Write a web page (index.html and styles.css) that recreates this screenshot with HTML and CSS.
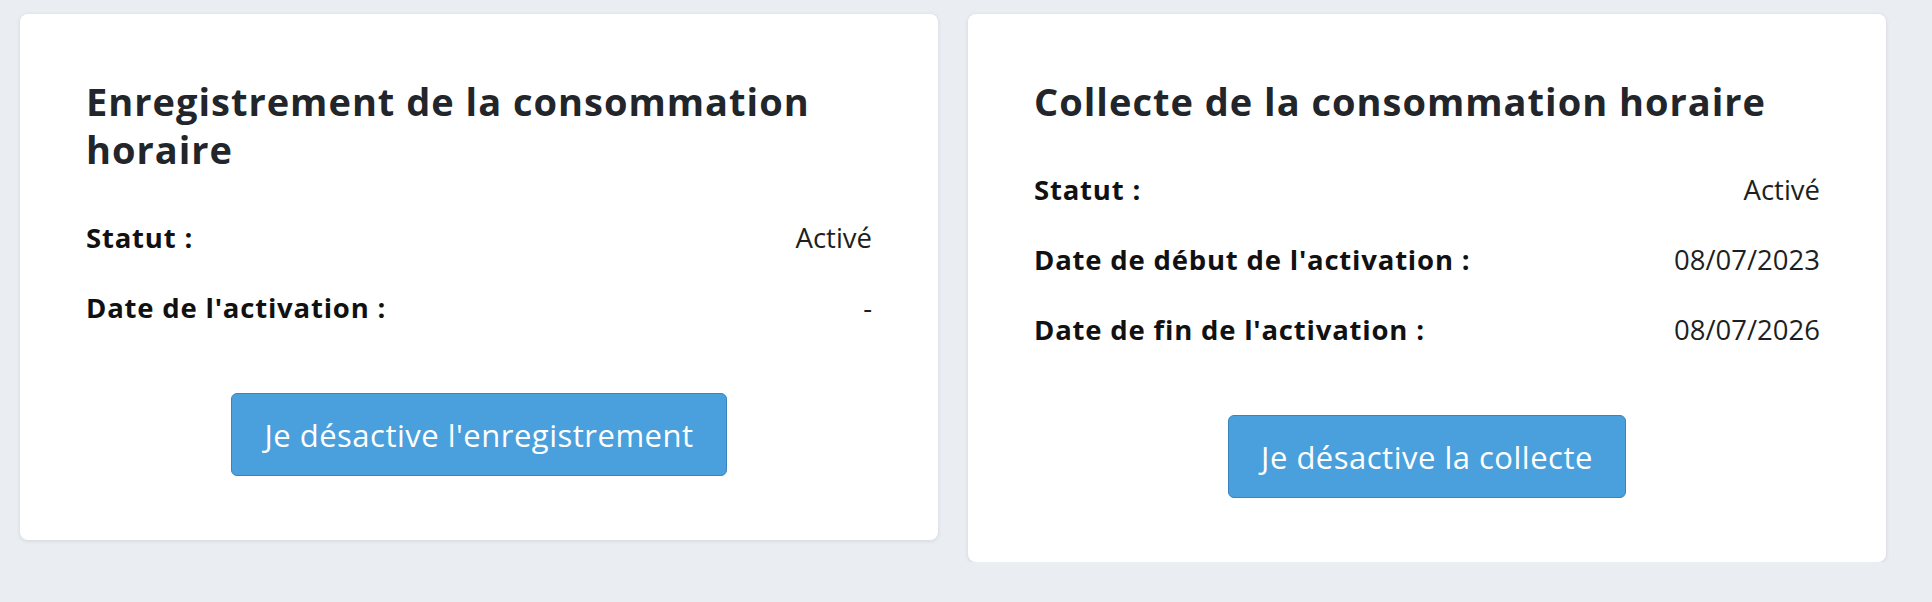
FILE: index.html
```html
<!DOCTYPE html>
<html lang="fr">
<head>
<meta charset="utf-8">
<title>Consommation horaire</title>
<link rel="stylesheet" href="styles.css">
</head>
<body>
<main class="page">
  <section class="card">
    <h2 class="card-title">Enregistrement de la consommation horaire</h2>
    <div class="row"><span class="label">Statut :</span><span class="value">Activé</span></div>
    <div class="row"><span class="label">Date de l'activation :</span><span class="value">-</span></div>
    <div class="actions"><button class="btn">Je désactive l'enregistrement</button></div>
  </section>
  <section class="card">
    <h2 class="card-title">Collecte de la consommation horaire</h2>
    <div class="row"><span class="label">Statut :</span><span class="value">Activé</span></div>
    <div class="row"><span class="label">Date de début de l'activation :</span><span class="value">08/07/2023</span></div>
    <div class="row"><span class="label">Date de fin de l'activation :</span><span class="value">08/07/2026</span></div>
    <div class="actions"><button class="btn">Je désactive la collecte</button></div>
  </section>
</main>
</body>
</html>
```
FILE: styles.css
```css
html, body {
  margin: 0;
  padding: 0;
  background: #eaedf2;
}
body {
  font-family: "Open Sans", "Noto Sans", sans-serif;
  color: #212529;
}
.page {
  display: flex;
  align-items: flex-start;
  gap: 30px;
  padding: 14px 46px 0 20px;
}
.card {
  flex: 1 1 0;
  background: #fff;
  border-radius: 8px;
  box-shadow: 0 1px 4px rgba(30, 40, 60, 0.12);
  padding: 63px 66px 64px;
}
.card-title {
  margin: 0 0 44.5px;
  font-size: 38px;
  line-height: 48px;
  letter-spacing: 1px;
  font-weight: 700;
  color: #22262b;
}
.row {
  display: flex;
  justify-content: space-between;
  align-items: baseline;
  font-size: 27.5px;
  line-height: 40px;
  margin-bottom: 30px;
}
.label {
  font-weight: 700;
  letter-spacing: 0.8px;
  color: #111;
}
.value {
  color: #1d1f22;
}
.actions {
  display: flex;
  justify-content: center;
  margin-top: 65.5px;
}
.btn {
  font-family: inherit;
  font-size: 31px;
  line-height: 40px;
  letter-spacing: 0.5px;
  color: #fff;
  background: #4aa0dc;
  border: 1px solid #3b83bd;
  border-radius: 6px;
  padding: 20.5px 32px;
  cursor: pointer;
}
```
